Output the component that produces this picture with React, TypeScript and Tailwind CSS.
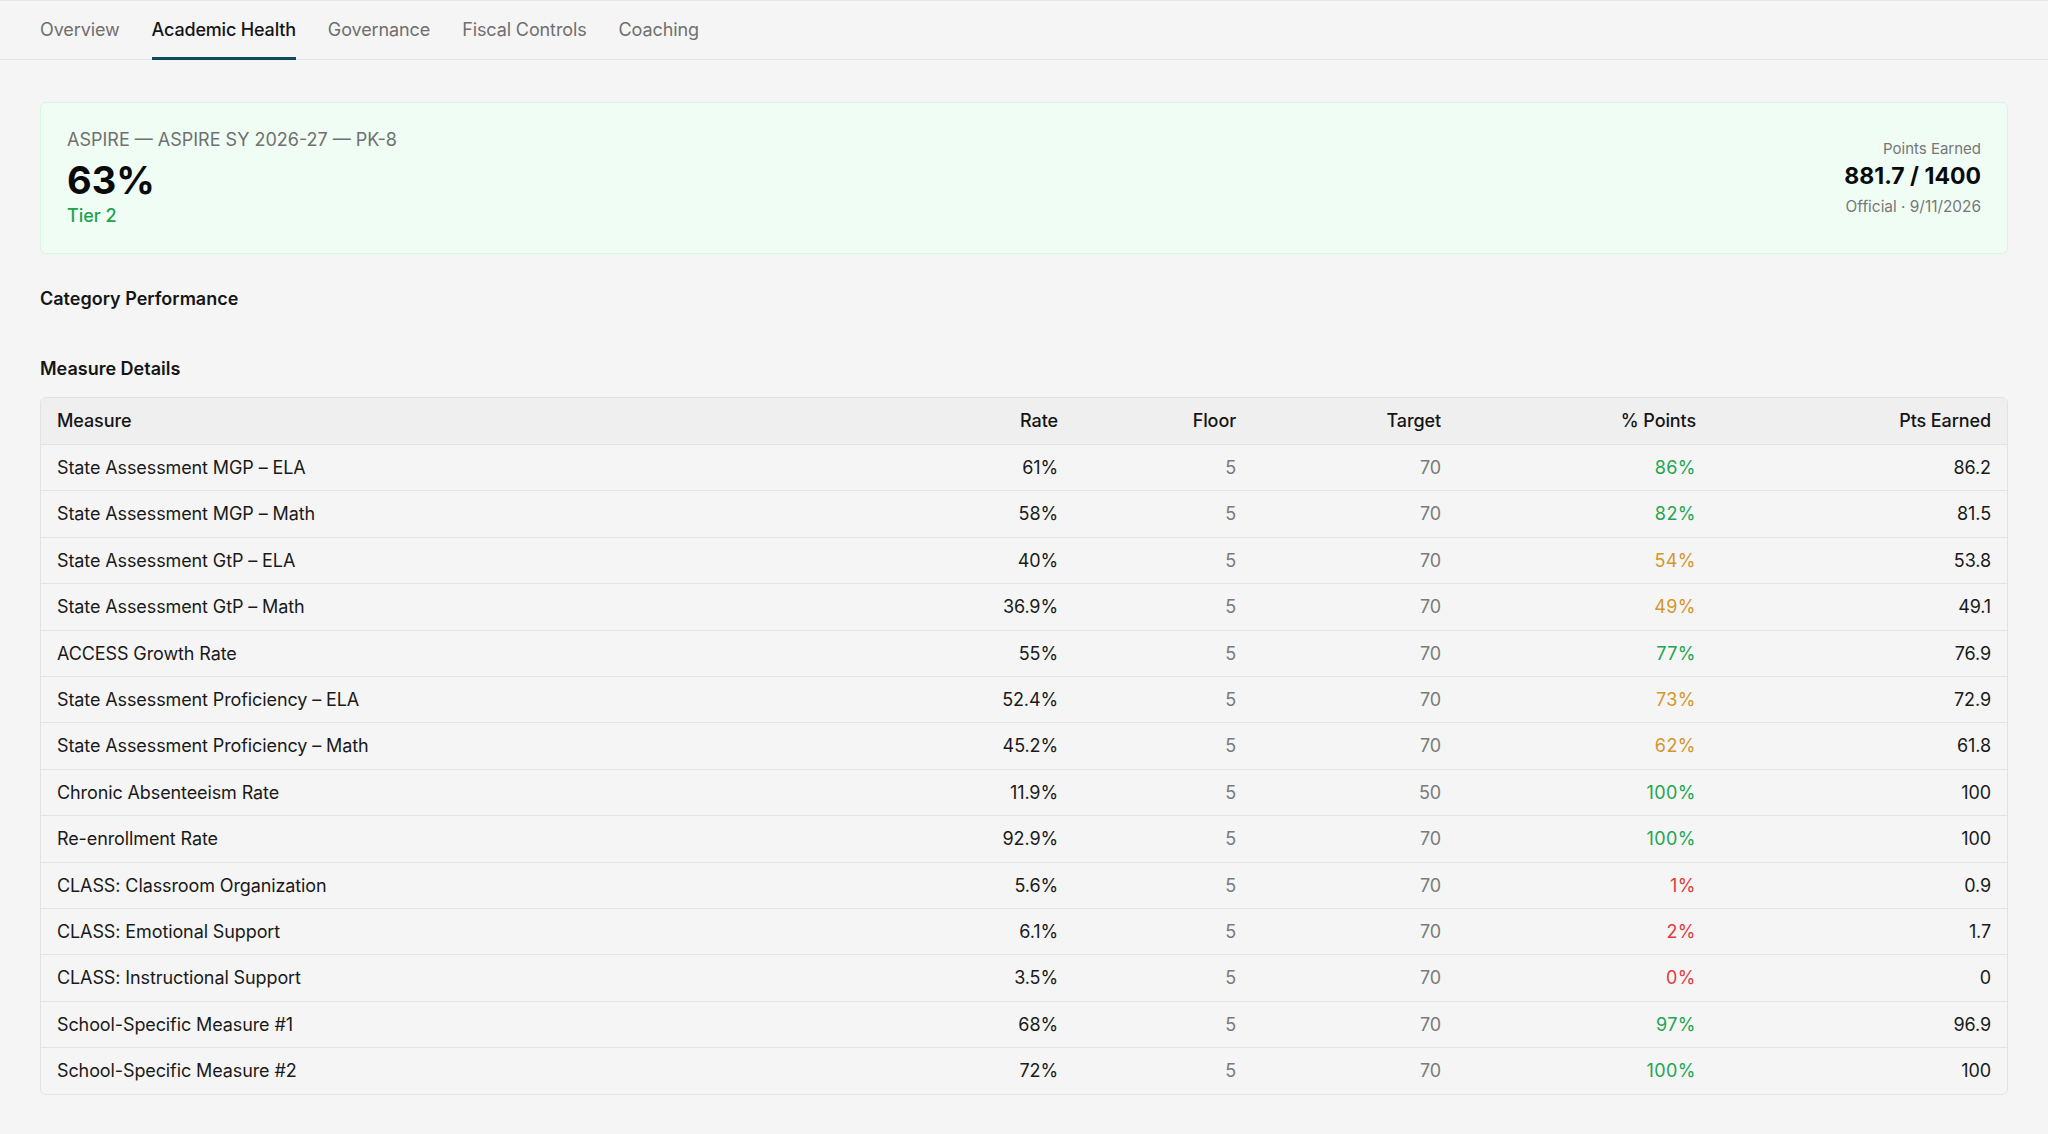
const tabs = ["Overview", "Academic Health", "Governance", "Fiscal Controls", "Coaching"];

type Tone = "good" | "warn" | "bad";

const measures: {
  name: string;
  rate: string;
  floor: number;
  target: number;
  pct: string;
  tone: Tone;
  earned: string;
}[] = [
  { name: "State Assessment MGP – ELA", rate: "61%", floor: 5, target: 70, pct: "86%", tone: "good", earned: "86.2" },
  { name: "State Assessment MGP – Math", rate: "58%", floor: 5, target: 70, pct: "82%", tone: "good", earned: "81.5" },
  { name: "State Assessment GtP – ELA", rate: "40%", floor: 5, target: 70, pct: "54%", tone: "warn", earned: "53.8" },
  { name: "State Assessment GtP – Math", rate: "36.9%", floor: 5, target: 70, pct: "49%", tone: "warn", earned: "49.1" },
  { name: "ACCESS Growth Rate", rate: "55%", floor: 5, target: 70, pct: "77%", tone: "good", earned: "76.9" },
  { name: "State Assessment Proficiency – ELA", rate: "52.4%", floor: 5, target: 70, pct: "73%", tone: "warn", earned: "72.9" },
  { name: "State Assessment Proficiency – Math", rate: "45.2%", floor: 5, target: 70, pct: "62%", tone: "warn", earned: "61.8" },
  { name: "Chronic Absenteeism Rate", rate: "11.9%", floor: 5, target: 50, pct: "100%", tone: "good", earned: "100" },
  { name: "Re-enrollment Rate", rate: "92.9%", floor: 5, target: 70, pct: "100%", tone: "good", earned: "100" },
  { name: "CLASS: Classroom Organization", rate: "5.6%", floor: 5, target: 70, pct: "1%", tone: "bad", earned: "0.9" },
  { name: "CLASS: Emotional Support", rate: "6.1%", floor: 5, target: 70, pct: "2%", tone: "bad", earned: "1.7" },
  { name: "CLASS: Instructional Support", rate: "3.5%", floor: 5, target: 70, pct: "0%", tone: "bad", earned: "0" },
  { name: "School-Specific Measure #1", rate: "68%", floor: 5, target: 70, pct: "97%", tone: "good", earned: "96.9" },
  { name: "School-Specific Measure #2", rate: "72%", floor: 5, target: 70, pct: "100%", tone: "good", earned: "100" },
];

const toneClass: Record<Tone, string> = {
  good: "text-[#22a552]",
  warn: "text-[#d4952c]",
  bad: "text-[#e03b3b]",
};

export default function App() {
  return (
    <div
      className="min-h-screen bg-[#f5f5f5] border-t border-[#e6e6e6] text-[#151515]"
      style={{ fontFamily: "Inter, 'Noto Sans', sans-serif" }}
    >
      <nav className="flex gap-8 px-10 border-b border-[#e4e4e4]">
        {tabs.map((tab) => (
          <button
            key={tab}
            className={`-mb-px pt-[15px] pb-[14px] text-[18px] leading-[27px] border-b-[3px] ${
              tab === "Academic Health"
                ? "border-[#0f4c5a] text-[#151515] font-medium tracking-[-0.01em]"
                : "border-transparent text-[#6f6f6f] tracking-[-0.006em]"
            }`}
          >
            {tab}
          </button>
        ))}
      </nav>

      <main className="px-10 pt-[42px]">
        <div className="flex items-center justify-between rounded-md border border-[#d6f7e0] bg-[#f0fdf4] px-[26px] py-6">
          <div className="flex flex-col">
            <span className="text-[18px] leading-[26px] text-[#707070]">
              ASPIRE — ASPIRE SY 2026-27 — PK-8
            </span>
            <span className="mt-[7px] text-[38px] leading-[40px] font-bold text-[#0a0a0a]">63%</span>
            <span className="mt-[2px] text-[18px] leading-[27px] font-medium text-[#1fa24d]">Tier 2</span>
          </div>
          <div className="flex flex-col items-end">
            <span className="text-[15px] leading-[22px] text-[#777777]">Points Earned</span>
            <span className="text-[23px] leading-[32px] font-bold text-[#0a0a0a]">881.7 / 1400</span>
            <span className="mt-1 text-[15.4px] leading-[22px] text-[#777777]">Official · 9/11/2026</span>
          </div>
        </div>

        <h3 className="mt-[31px] text-[18px] leading-[27px] font-semibold">Category Performance</h3>

        <h3 className="mt-[43px] text-[18px] leading-[27px] font-semibold">Measure Details</h3>

        <div className="mt-[15px] mb-10 overflow-hidden rounded-md border border-[#e2e2e2]">
          <table className="w-full table-fixed border-collapse text-[18px] tracking-[-0.006em]">
            <thead className="bg-[#efefef]">
              <tr>
                <th className="px-4 py-[10px] leading-[26px] text-left font-medium">Measure</th>
                <th className="w-[200px] px-4 py-[10px] leading-[26px] text-right font-medium">Rate</th>
                <th className="w-[178px] px-4 py-[10px] leading-[26px] text-right font-medium">Floor</th>
                <th className="w-[205px] px-4 py-[10px] leading-[26px] text-right font-medium">Target</th>
                <th className="w-[255px] px-4 py-[10px] leading-[26px] text-right font-medium">% Points</th>
                <th className="w-[295px] px-4 py-[10px] leading-[26px] text-right font-medium">Pts Earned</th>
              </tr>
            </thead>
            <tbody>
              {measures.map((m) => (
                <tr key={m.name} className="border-t border-[#e2e2e2]">
                  <td className="px-4 py-[10px] leading-[25.4px] text-[#1a1a1a]">{m.name}</td>
                  <td className="px-4 py-[10px] leading-[25.4px] text-right text-[#1a1a1a]">{m.rate}</td>
                  <td className="px-4 py-[10px] leading-[25.4px] text-right text-[#7a7a7a]">{m.floor}</td>
                  <td className="px-4 py-[10px] leading-[25.4px] text-right text-[#7a7a7a]">{m.target}</td>
                  <td className={`px-4 py-[10px] leading-[25.4px] text-right tracking-[0.025em] ${toneClass[m.tone]}`}>
                    {m.pct}
                  </td>
                  <td className="px-4 py-[10px] leading-[25.4px] text-right text-[#1a1a1a]">{m.earned}</td>
                </tr>
              ))}
            </tbody>
          </table>
        </div>
      </main>
    </div>
  );
}
